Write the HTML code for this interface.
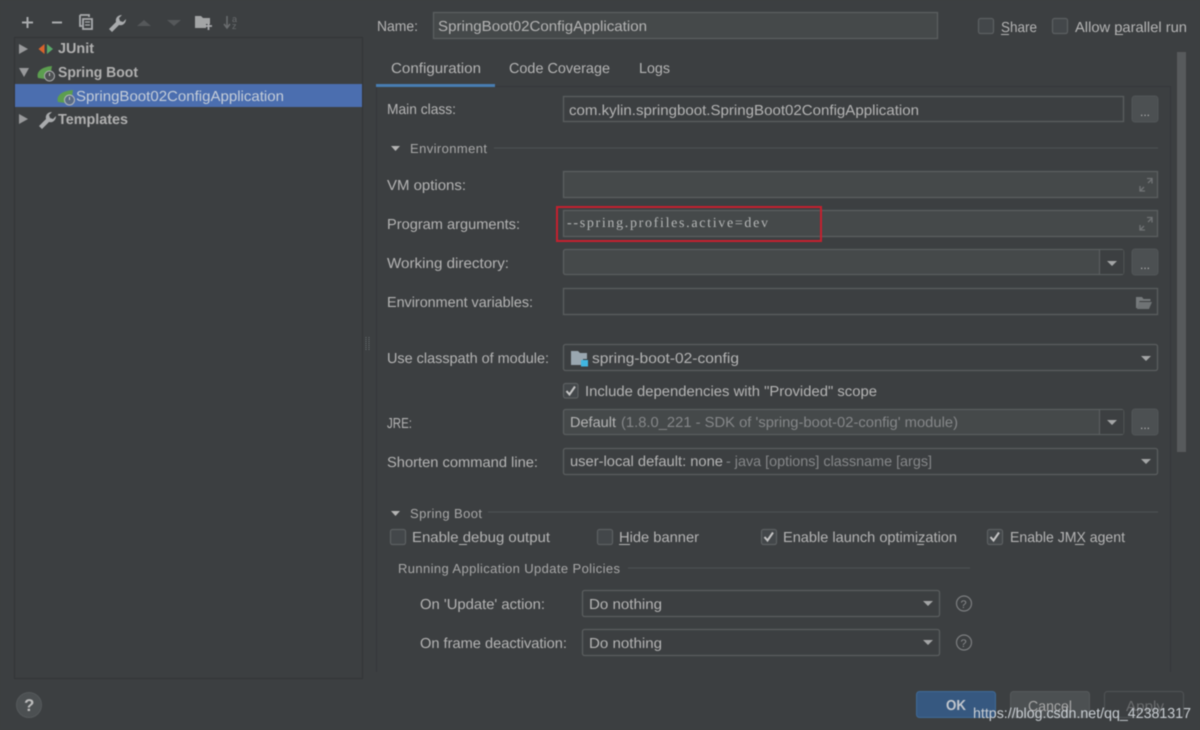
<!DOCTYPE html>
<html><head><meta charset="utf-8"><style>
html,body{margin:0;padding:0;background:#3c3f41;width:1200px;height:730px;overflow:hidden}
svg{display:block;filter:blur(.4px)}
text{font-family:"Liberation Sans",sans-serif;font-size:14.5px;fill:#b4b4b4;text-rendering:geometricPrecision}
.g{fill:#858789}
.sec{font-size:13px;fill:#a8a8a8}
.b{font-weight:bold;fill:#b0b0b0}
.cb{fill:#43474a;stroke:#5c6062;stroke-width:1.2}
.tf{fill:#45494a;stroke:#5a5e5f;stroke-width:1.3}
.tfd{fill:#3c3f41;stroke:#5a5e5f;stroke-width:1.3}
.btn{fill:#4c5052;stroke:#515557}
.ln{stroke:#4f5254;stroke-width:1}
.ar{fill:#a3a5a6}
.ul{stroke:#b4b4b4;stroke-width:1}
.ic{fill:none;stroke:#a9abad;stroke-width:2}
</style></head><body>
<svg width="1200" height="730" viewBox="0 0 1200 730" xmlns="http://www.w3.org/2000/svg">
<rect width="1200" height="730" fill="#3c3f41"/>

<!-- toolbar -->
<path d="M22 22.500H33M27.500 17V28" class="ic"/>
<path d="M52 22.500H62" class="ic"/>
<path d="M80 15h9v2M83 19h9v10h-9z" fill="none" stroke="#a9abad" stroke-width="1.800"/>
<path d="M80 15v11h2" fill="none" stroke="#a9abad" stroke-width="1.800"/>
<path d="M85 22h5M85 25h5" stroke="#a9abad" stroke-width="1.300"/>
<path d="M109 29l7-7c-1-4 2-7 6-7l-3 3 1 3 3 1 3-3c0 4-3 7-7 6l-7 7z" fill="#a9abad"/>
<path d="M137 26l7-6 7 6z" fill="#55585a"/>
<path d="M167 20h14l-7 6z" fill="#55585a"/>
<path d="M195 16h6l2 2h7v6h-4v4h-11z" fill="#a3a5a6"/>
<path d="M205 26h7M208.500 23v7" stroke="#a9abad" stroke-width="1.800"/>
<path d="M227 16v11M224 24l3 4 3-4" fill="none" stroke="#6a6d6f" stroke-width="1.500"/>
<text x="232" y="22" style="font-size:9px;fill:#6a6d6f">a</text>
<text x="232" y="29" style="font-size:9px;fill:#6a6d6f">z</text>

<!-- left tree -->
<rect x="14.500" y="37.500" width="348" height="641" fill="#3c3f41" stroke="#323436"/>
<rect x="15" y="84" width="347" height="23" fill="#4b6eaf"/>
<path d="M19 44l9 5-9 5z" fill="#98999b"/>
<path d="M19 68h10l-5 9z" fill="#98999b"/>
<path d="M19 114l9 5-9 5z" fill="#98999b"/>
<path d="M44.500 44l-6 5 6 5z" fill="#d8642c"/>
<path d="M47 44l6 5-6 5z" fill="#59a869"/>
<text x="58" y="53" class="b" textLength="36" lengthAdjust="spacingAndGlyphs">JUnit</text>
<path d="M38 78c-2-6 3-11 14-12-1 5-1 11-7 13z" fill="#5c9e4f"/>
<circle cx="49.500" cy="76" r="5" fill="#4d5052" stroke="#a9abad"/>
<path d="M49.500 73v3" stroke="#c8c8c8"/>
<text x="58" y="77" class="b" textLength="80" lengthAdjust="spacingAndGlyphs">Spring Boot</text>
<path d="M58 102c-2-6 3-11 15-12-1 5-1 11-7 13z" fill="#5c9e4f"/>
<circle cx="69.500" cy="100" r="5" fill="#5a6b85" stroke="#b5b8bb"/>
<path d="M69.500 97v3" stroke="#d0d0d0"/>
<text x="76" y="101" textLength="208" lengthAdjust="spacingAndGlyphs" style="fill:#c5cdd8">SpringBoot02ConfigApplication</text>
<path d="M39 126l7-7c-1-4 2-7 6-7l-3 3 1 3 3 1 3-3c0 4-3 7-7 6l-7 7z" fill="#a9abad"/>
<text x="58" y="124" class="b" textLength="70" lengthAdjust="spacingAndGlyphs">Templates</text>

<!-- splitter -->
<path d="M366 337v13M369 337v13" stroke="#6a6d6f" stroke-width="1" stroke-dasharray="1 1"/>

<!-- name row -->
<text x="377" y="31" textLength="41" lengthAdjust="spacingAndGlyphs">Name:</text>
<rect x="433.500" y="12.500" width="504" height="26" class="tf"/>
<text x="438" y="31" textLength="209" lengthAdjust="spacingAndGlyphs">SpringBoot02ConfigApplication</text>
<rect x="978.500" y="18.500" width="15" height="15" rx="2" class="cb"/>
<text x="1001" y="32" textLength="36" lengthAdjust="spacingAndGlyphs">Share</text>
<path d="M1001 34.500h8" class="ul"/>
<rect x="1052.500" y="18.500" width="15" height="15" rx="2" class="cb"/>
<text x="1075" y="32" textLength="112" lengthAdjust="spacingAndGlyphs">Allow parallel run</text>
<path d="M1115 34.500h8" class="ul"/>

<!-- tabs -->
<path d="M376.500 672V86.500H1170.500V672" fill="none" stroke="#35373a"/>
<text x="391" y="73" textLength="90" lengthAdjust="spacingAndGlyphs">Configuration</text>
<text x="509" y="73" textLength="101" lengthAdjust="spacingAndGlyphs">Code Coverage</text>
<text x="639" y="73" textLength="31" lengthAdjust="spacingAndGlyphs">Logs</text>
<rect x="376" y="84" width="119" height="3" fill="#4a88c7" opacity=".85"/>
<rect x="1177" y="52" width="9" height="400" fill="#575a5c"/>

<!-- main class -->
<text x="387" y="114" textLength="69" lengthAdjust="spacingAndGlyphs">Main class:</text>
<rect x="563.500" y="96.500" width="560" height="25" class="tfd"/>
<text x="569" y="115" textLength="350" lengthAdjust="spacingAndGlyphs">com.kylin.springboot.SpringBoot02ConfigApplication</text>
<rect x="1132" y="96" width="26" height="26" rx="3" class="btn"/>
<text x="1140" y="116" style="font-size:12px" textLength="10" lengthAdjust="spacingAndGlyphs">...</text>

<!-- environment -->
<path d="M391 146h9l-4.500 5z" fill="#b4b4b4"/>
<text x="410" y="153" class="sec" textLength="77" lengthAdjust="spacing">Environment</text>
<path d="M494 148h664" class="ln"/>

<text x="387" y="190" textLength="79" lengthAdjust="spacingAndGlyphs">VM options:</text>
<rect x="563.500" y="171.500" width="594" height="26" class="tf"/>
<path d="M1140 191l4-4M1148 183l4-4M1140 186v5h5M1147 178.500h5v5" fill="none" stroke="#707375" stroke-width="1.300"/>

<text x="387" y="229" textLength="133" lengthAdjust="spacingAndGlyphs">Program arguments:</text>
<rect x="563.500" y="210.500" width="594" height="26" class="tf"/>
<text x="567" y="227" textLength="201" lengthAdjust="spacing" style="font-family:'Liberation Serif',serif;font-size:14px;fill:#b4b6b6">--spring.profiles.active=dev</text>
<path d="M1140 230l4-4M1148 222l4-4M1140 225v5h5M1147 217.500h5v5" fill="none" stroke="#707375" stroke-width="1.300"/>
<rect x="557" y="207" width="264" height="34" fill="none" stroke="#c6202e" stroke-width="2"/>

<text x="387" y="268" textLength="122" lengthAdjust="spacingAndGlyphs">Working directory:</text>
<rect x="563.500" y="249.500" width="560" height="25" rx="2" class="tf"/>
<rect x="1100" y="250" width="23.500" height="24" fill="#3c3f41"/>
<path d="M1099.500 250v24" stroke="#5a5e5f" stroke-width="1.200"/>
<path d="M1107 261h10l-5 5z" class="ar"/>
<rect x="1132" y="249" width="26" height="26" rx="3" class="btn"/>
<text x="1140" y="269" style="font-size:12px" textLength="10" lengthAdjust="spacingAndGlyphs">...</text>

<text x="387" y="307" textLength="146" lengthAdjust="spacingAndGlyphs">Environment variables:</text>
<rect x="563.500" y="288.500" width="594" height="26" class="tfd"/>
<path d="M1136 297h6l1.500 2h7v2h-11l-2 7h-1.500z" fill="#767a7c"/>
<path d="M1139 302h13l-3 7h-12z" fill="#6f7375"/>

<text x="387" y="363" textLength="162" lengthAdjust="spacingAndGlyphs">Use classpath of module:</text>
<rect x="563.500" y="344.500" width="594" height="26" rx="2" class="tfd"/>
<path d="M571 351h7l2 2h7v6h-4v6h-12z" fill="#9aa7b0"/>
<rect x="581" y="360" width="7" height="6.500" fill="#40b6e0"/>
<text x="592" y="363" textLength="147" lengthAdjust="spacingAndGlyphs">spring-boot-02-config</text>
<path d="M1141 356h10l-5 5z" class="ar"/>

<rect x="563.500" y="383.500" width="14.500" height="14.500" rx="2" class="cb"/>
<path d="M566.500 391l3 3.500 5.500-8" fill="none" stroke="#c5c5c5" stroke-width="2"/>
<text x="585" y="396" textLength="292" lengthAdjust="spacingAndGlyphs">Include dependencies with "Provided" scope</text>

<text x="387" y="428" textLength="25" lengthAdjust="spacingAndGlyphs">JRE:</text>
<rect x="563.500" y="409.500" width="560" height="25" rx="2" class="tf"/>
<rect x="1100" y="410" width="23.500" height="24" fill="#3c3f41"/>
<path d="M1099.500 410v24" stroke="#5a5e5f" stroke-width="1.200"/>
<path d="M1107 420h10l-5 5z" class="ar"/>
<text x="570" y="427" textLength="46" lengthAdjust="spacingAndGlyphs">Default</text>
<text x="621" y="427" class="g" textLength="337" lengthAdjust="spacingAndGlyphs">(1.8.0_221 - SDK of 'spring-boot-02-config' module)</text>
<rect x="1132" y="409" width="26" height="26" rx="3" class="btn"/>
<text x="1140" y="429" style="font-size:12px" textLength="10" lengthAdjust="spacingAndGlyphs">...</text>

<text x="387" y="467" textLength="151" lengthAdjust="spacingAndGlyphs">Shorten command line:</text>
<rect x="563.500" y="448.500" width="594" height="26" rx="2" class="tfd"/>
<text x="570" y="466" textLength="153" lengthAdjust="spacingAndGlyphs">user-local default: none</text>
<text x="726" y="466" class="g" textLength="206" lengthAdjust="spacingAndGlyphs">- java [options] classname [args]</text>
<path d="M1141 459h10l-5 5z" class="ar"/>

<!-- spring boot section -->
<path d="M391 511h9l-4.500 5z" fill="#b4b4b4"/>
<text x="410" y="518" class="sec" textLength="72" lengthAdjust="spacing">Spring Boot</text>
<path d="M488 512h670" class="ln"/>

<rect x="390.500" y="529.500" width="15" height="15" rx="2" class="cb"/>
<text x="412" y="542" textLength="138" lengthAdjust="spacingAndGlyphs">Enable debug output</text>
<path d="M459 544.500h8" class="ul"/>
<rect x="597.500" y="529.500" width="15" height="15" rx="2" class="cb"/>
<text x="619" y="542" textLength="80" lengthAdjust="spacingAndGlyphs">Hide banner</text>
<path d="M619 544.500h11" class="ul"/>
<rect x="761.500" y="529.500" width="15" height="15" rx="2" class="cb"/>
<path d="M764.500 537l3 3.500 5.500-8" fill="none" stroke="#c5c5c5" stroke-width="2"/>
<text x="783" y="542" textLength="174" lengthAdjust="spacingAndGlyphs">Enable launch optimization</text>
<path d="M917 544.500h7" class="ul"/>
<rect x="987.500" y="529.500" width="15" height="15" rx="2" class="cb"/>
<path d="M990.500 537l3 3.500 5.500-8" fill="none" stroke="#c5c5c5" stroke-width="2"/>
<text x="1010" y="542" textLength="115" lengthAdjust="spacingAndGlyphs">Enable JMX agent</text>
<path d="M1075 544.500h9" class="ul"/>

<text x="398" y="573" class="sec" textLength="222" lengthAdjust="spacing">Running Application Update Policies</text>
<path d="M628 568h342" class="ln"/>

<text x="420" y="609" textLength="125" lengthAdjust="spacingAndGlyphs">On 'Update' action:</text>
<rect x="582.500" y="590.500" width="357" height="26" rx="2" class="tfd"/>
<text x="589" y="609" textLength="73" lengthAdjust="spacingAndGlyphs">Do nothing</text>
<path d="M923 601h10l-5 5z" class="ar"/>
<circle cx="964" cy="603.500" r="7.500" fill="none" stroke="#7d7f81" stroke-width="1.200"/>
<text x="960.500" y="608" style="font-size:11px;fill:#8b8d8f">?</text>

<text x="420" y="648" textLength="147" lengthAdjust="spacingAndGlyphs">On frame deactivation:</text>
<rect x="582.500" y="629.500" width="357" height="26" rx="2" class="tfd"/>
<text x="589" y="648" textLength="73" lengthAdjust="spacingAndGlyphs">Do nothing</text>
<path d="M923 640h10l-5 5z" class="ar"/>
<circle cx="964" cy="642.500" r="7.500" fill="none" stroke="#7d7f81" stroke-width="1.200"/>
<text x="960.500" y="647" style="font-size:11px;fill:#8b8d8f">?</text>

<!-- bottom -->
<circle cx="29" cy="705" r="12.500" fill="#4c5052" stroke="#55595b"/>
<text x="24" y="711" style="font-size:17px;font-weight:bold;fill:#bdbdbd">?</text>

<rect x="916.500" y="691.500" width="79" height="26" rx="3" fill="#365880" stroke="#3f6a97"/>
<text x="946" y="710" textLength="20" lengthAdjust="spacingAndGlyphs" style="font-weight:bold;fill:#c3c8ce">OK</text>
<rect x="1010.500" y="691.500" width="79" height="26" rx="3" fill="#4c5052" stroke="#565a5c"/>
<text x="1028" y="711" textLength="44" lengthAdjust="spacingAndGlyphs" style="fill:#a8a8a8">Cancel</text>
<rect x="1104.500" y="691.500" width="79" height="26" rx="3" fill="#3c3f41" stroke="#515456"/>
<text x="1126" y="711" textLength="38" lengthAdjust="spacingAndGlyphs" style="fill:#6a6c6e">Apply</text>
<text x="973" y="718" textLength="218" lengthAdjust="spacingAndGlyphs" style="font-size:14.500px;fill:#c9ced3">https://blog.csdn.net/qq_42381317</text>
</svg>
</body></html>
